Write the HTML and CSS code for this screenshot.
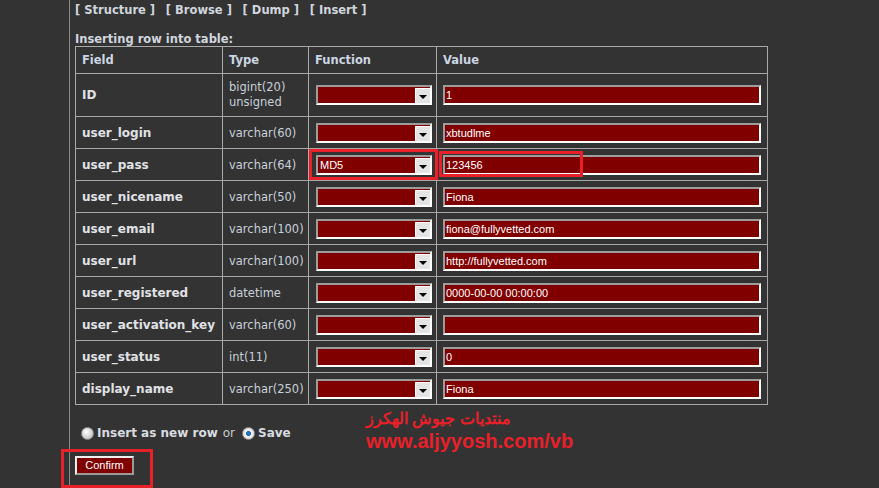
FILE: index.html
```html
<!DOCTYPE html>
<html lang="en">
<head>
    <meta charset="UTF-8">
    <title>Insert row</title>
    <link rel="stylesheet" href="styles.css">
</head>
<body>
<div class="page">
    <div class="nav">
        <span class="navlink">[ Structure ]</span>
        <span class="navlink">[ Browse ]</span>
        <span class="navlink">[ Dump ]</span>
        <span class="navlink">[ Insert ]</span>
    </div>
    <div class="title">Inserting row into table:</div>
    <table class="rows">
        <colgroup>
            <col class="c-field">
            <col class="c-type">
            <col class="c-func">
            <col class="c-value">
        </colgroup>
        <tr>
            <th>Field</th><th>Type</th><th>Function</th><th>Value</th>
        </tr>
        <tr class="tall">
            <td class="fname">ID</td>
            <td class="ftype">bigint(20)<br>unsigned</td>
            <td><div class="sel"><span class="seltext"></span><span class="selbtn"></span></div></td>
            <td><div class="inp">1</div></td>
        </tr>
        <tr>
            <td class="fname">user_login</td>
            <td class="ftype">varchar(60)</td>
            <td><div class="sel"><span class="seltext"></span><span class="selbtn"></span></div></td>
            <td><div class="inp">xbtudlme</div></td>
        </tr>
        <tr>
            <td class="fname">user_pass</td>
            <td class="ftype">varchar(64)</td>
            <td class="marked"><div class="sel"><span class="seltext">MD5</span><span class="selbtn"></span></div><span class="mark mark-sel"></span></td>
            <td class="marked"><div class="inp">123456</div><span class="mark mark-val"></span></td>
        </tr>
        <tr>
            <td class="fname">user_nicename</td>
            <td class="ftype">varchar(50)</td>
            <td><div class="sel"><span class="seltext"></span><span class="selbtn"></span></div></td>
            <td><div class="inp">Fiona</div></td>
        </tr>
        <tr>
            <td class="fname">user_email</td>
            <td class="ftype">varchar(100)</td>
            <td><div class="sel"><span class="seltext"></span><span class="selbtn"></span></div></td>
            <td><div class="inp">fiona@fullyvetted.com</div></td>
        </tr>
        <tr>
            <td class="fname">user_url</td>
            <td class="ftype">varchar(100)</td>
            <td><div class="sel"><span class="seltext"></span><span class="selbtn"></span></div></td>
            <td><div class="inp">http://fullyvetted.com</div></td>
        </tr>
        <tr>
            <td class="fname">user_registered</td>
            <td class="ftype">datetime</td>
            <td><div class="sel"><span class="seltext"></span><span class="selbtn"></span></div></td>
            <td><div class="inp">0000-00-00 00:00:00</div></td>
        </tr>
        <tr>
            <td class="fname">user_activation_key</td>
            <td class="ftype">varchar(60)</td>
            <td><div class="sel"><span class="seltext"></span><span class="selbtn"></span></div></td>
            <td><div class="inp"></div></td>
        </tr>
        <tr>
            <td class="fname">user_status</td>
            <td class="ftype">int(11)</td>
            <td><div class="sel"><span class="seltext"></span><span class="selbtn"></span></div></td>
            <td><div class="inp">0</div></td>
        </tr>
        <tr>
            <td class="fname">display_name</td>
            <td class="ftype">varchar(250)</td>
            <td><div class="sel"><span class="seltext"></span><span class="selbtn"></span></div></td>
            <td><div class="inp">Fiona</div></td>
        </tr>
    </table>
    <div class="bottom">
        <div class="actions">
            <div class="choice">
                <span class="radio"></span><b>Insert as new row</b> <span class="or">or</span>
                <span class="radio on"></span><b>Save</b>
            </div>
            <div class="confirmwrap">
                <span class="confirm">Confirm</span>
                <span class="mark mark-btn"></span>
            </div>
        </div>
        <div class="ad">
            <div class="ad-ar" dir="rtl">منتديات جيوش الهكرز</div>
            <div class="ad-url">www.aljyyosh.com/vb</div>
        </div>
    </div>
</div>
</body>
</html>
```

FILE: styles.css
```css
body {
    margin: 0;
    background: #333333;
    height: 488px;
    overflow: hidden;
    font-family: "DejaVu Sans", Verdana, sans-serif;
    font-size: 11.5px;
    color: #d8dce0;
}
.page {
    margin-left: 69px;
    border-left: 1px solid #8a8a8a;
    height: 488px;
    padding-left: 5px;
    position: relative;
}
.nav {
    padding-top: 3px;
    height: 15px;
    line-height: 14px;
}
.navlink {
    font-weight: bold;
    color: #d0d6de;
    margin-right: 7px;
}
.title {
    margin-top: 14px;
    font-weight: bold;
    color: #d0d6de;
    line-height: 14px;
}
.rows {
    border-collapse: collapse;
    border: 1px solid #b0b0b0;
    table-layout: fixed;
    width: 692px;
}
.c-field { width: 147px; }
.c-type { width: 86px; }
.c-func { width: 128px; }
.c-value { width: 331px; }
.rows th {
    border: 1px solid #a8a8a8;
    text-align: left;
    padding: 6px 6px 6px 6px;
    line-height: 14px;
    color: #ccd6e2;
    font-weight: bold;
}
.rows td {
    border: 1px solid #a8a8a8;
    padding: 6px 6px 5px 6px;
    line-height: 20px;
    vertical-align: middle;
}
.rows tr.tall td {
    padding-top: 6px;
    padding-bottom: 6px;
}
.rows td.fname {
    font-weight: bold;
    font-size: 12px;
    color: #e0e2e6;
    white-space: nowrap;
}
.rows td.ftype {
    color: #c8d0da;
    line-height: 15px;
    white-space: nowrap;
}
.rows td.marked {
    position: relative;
}
.sel {
    box-sizing: border-box;
    width: 116px;
    height: 20px;
    margin-left: 1px;
    background: #800000;
    border-style: solid;
    border-width: 2px;
    border-color: #9c9c9c #ffffff #ffffff #9c9c9c;
    display: flex;
    align-items: center;
    justify-content: space-between;
}
.seltext {
    font-family: "Liberation Sans", Arial, sans-serif;
    font-size: 11px;
    color: #ffffff;
    padding-left: 2px;
    line-height: 14px;
}
.selbtn {
    width: 15px;
    height: 15px;
    background: #e4e4e4;
    border-left: 1px solid #ffffff;
    border-top: 1px solid #ffffff;
    box-sizing: border-box;
    position: relative;
}
.selbtn::after {
    content: "";
    position: absolute;
    left: 3px;
    top: 6px;
    border-left: 4px solid transparent;
    border-right: 4px solid transparent;
    border-top: 4px solid #000000;
}
.inp {
    box-sizing: border-box;
    width: 318px;
    height: 20px;
    background: #800000;
    border-style: solid;
    border-width: 2px;
    border-color: #9c9c9c #ffffff #ffffff #9c9c9c;
    font-family: "Liberation Sans", Arial, sans-serif;
    font-size: 11px;
    color: #ffffff;
    line-height: 16px;
    padding-left: 1px;
}
.mark {
    position: absolute;
    border: 3px solid #e8202a;
    box-sizing: border-box;
}
.mark-sel {
    left: 0;
    top: 0;
    width: 129px;
    height: 31px;
}
.mark-val {
    left: 2px;
    top: 2px;
    width: 144px;
    height: 26px;
}
.bottom {
    display: flex;
    align-items: flex-start;
}
.actions {
    width: 291px;
}
.choice {
    margin-top: 20px;
    height: 16px;
    display: flex;
    align-items: center;
    font-size: 12px;
    color: #d8dce0;
    padding-left: 6px;
}
.choice b {
    color: #d8dce0;
    margin-left: 3px;
}
.or {
    margin: 0 7px 0 5px;
    color: #c8ccd0;
}
.radio {
    width: 11px;
    height: 11px;
    border-radius: 50%;
    background: radial-gradient(circle at 40% 35%, #ffffff, #c8c8c8 70%, #9a9a9a);
    border: 1px solid #8c8c8c;
}
.radio.on {
    background: radial-gradient(circle, #2a7cc8 0, #1766b0 28%, #f4f4f4 34%, #d0d0d0 100%);
}
.confirmwrap {
    position: relative;
    margin-top: 15px;
    height: 20px;
}
.confirm {
    display: inline-block;
    box-sizing: border-box;
    width: 59px;
    height: 19px;
    background: #800000;
    border-style: solid;
    border-width: 2px;
    border-color: #f0f0f0 #9a9a9a #9a9a9a #f0f0f0;
    color: #ffffff;
    font-family: "Liberation Sans", Arial, sans-serif;
    font-size: 11px;
    text-align: center;
    line-height: 15px;
}
.mark-btn {
    left: -14px;
    top: -7px;
    width: 92px;
    height: 39px;
}
.ad {
    margin-top: 3px;
    color: #e8202a;
    font-weight: bold;
    font-family: "Liberation Sans", Arial, sans-serif;
    white-space: nowrap;
}
.ad-ar {
    font-size: 15.5px;
    line-height: 22px;
    text-align: left;
}
.ad-url {
    font-size: 20px;
    line-height: 22px;
}
```
